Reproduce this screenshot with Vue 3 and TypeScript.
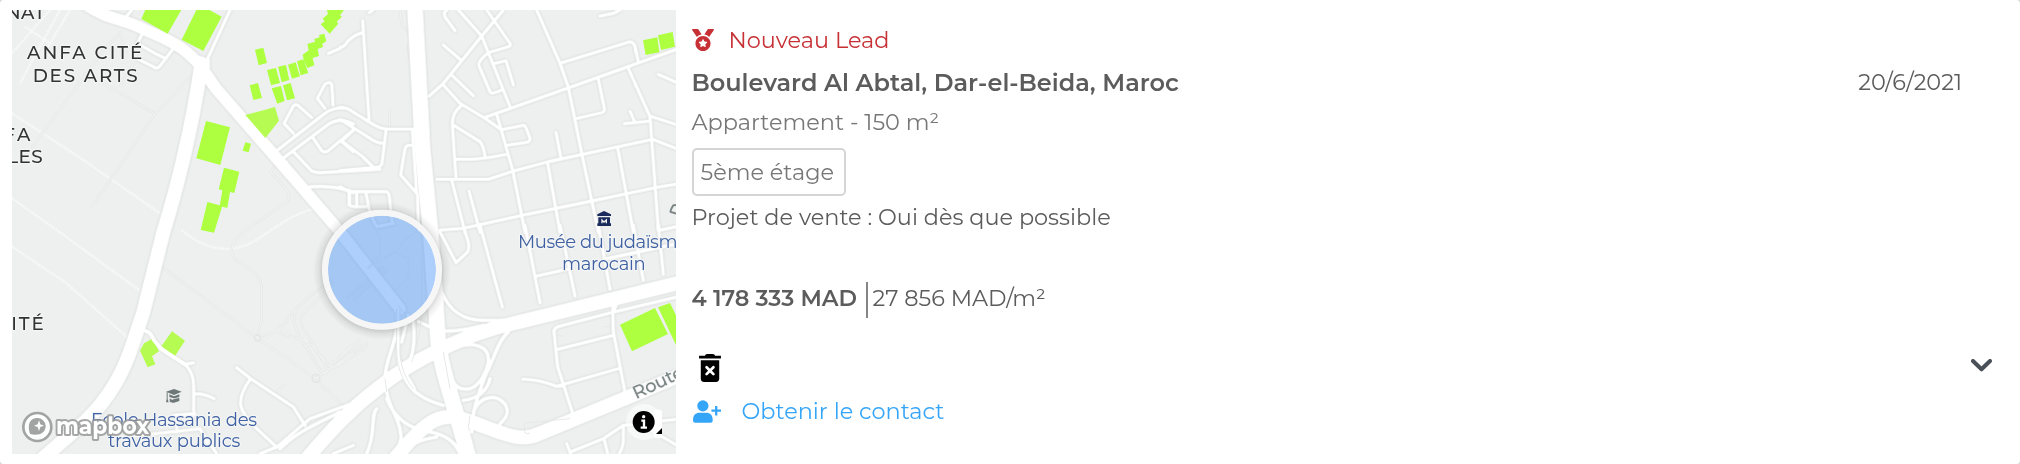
<script setup lang="ts">
interface MapLabel {
  text: string
  x: number
  y: number
  length: number
  kind: 'district' | 'poi'
}

const lead = {
  status: 'Nouveau Lead',
  address: 'Boulevard Al Abtal, Dar-el-Beida, Maroc',
  summary: 'Appartement - 150 m²',
  floor: '5ème étage',
  project: 'Projet de vente : Oui dès que possible',
  price: '4 178 333 MAD',
  unitPrice: '27 856 MAD/m²',
  date: '20/6/2021',
  action: 'Obtenir le contact',
}

const labels: MapLabel[] = [
  { text: 'NAT', x: 17, y: 56, length: 118, kind: 'district' },
  { text: 'ANFA CITÉ', x: 81, y: 178, length: 346, kind: 'district' },
  { text: 'DES ARTS', x: 98, y: 245, length: 315, kind: 'district' },
  { text: 'FA', x: 10, y: 422, length: 81, kind: 'district' },
  { text: 'LES', x: 22, y: 490, length: 106, kind: 'district' },
  { text: 'ITÉ', x: 34, y: 990, length: 97, kind: 'district' },
  { text: 'Ecole Hassania des', x: 273, y: 1277, length: 498, kind: 'poi' },
  { text: 'travaux publics', x: 324, y: 1341, length: 397, kind: 'poi' },
  { text: 'Musée du judaïsme', x: 1554, y: 745, length: 510, kind: 'poi' },
  { text: 'marocain', x: 1686, y: 811, length: 251, kind: 'poi' },
]

const parks: string[] = [
  '440,20 424,57 503,101 545,28',
  '590,28 545,119 610,153 665,50 625,28',
  '765,149 790,143 801,189 776,196',
  '749,256 774,249 786,294 760,300',
  '801,210 828,204 840,249 813,256',
  '834,200 858,195 868,240 845,247',
  '864,194 887,187 900,229 876,236',
  '891,184 910,178 925,219 902,226',
  '815,265 843,258 854,303 832,311',
  '849,256 872,249 885,295 861,301',
  '908,164 926,151 922,132 945,125 943,117 959,112 957,105 973,101 979,124 967,131 969,141 953,147 957,168 938,174 943,196 922,204 912,184',
  '980,28 1033,28 1020,46 1026,50 1010,65 1015,71 989,101 962,73 974,64 968,56 984,42',
  '618,363 690,382 661,495 589,475',
  '736,427 753,431 746,457 728,452',
  '672,503 718,515 703,579 690,576 682,624 659,618 667,571 656,568',
  '622,606 667,618 642,698 602,690',
  '1929,121 1972,112 1978,157 1937,165',
  '1974,106 2018,96 2025,140 1983,150',
  '1860,974 1965,924 2004,1002 1896,1054',
  '1974,922 2010,909 2040,970 2040,1060',
]
const softParks: string[] = [
  '736,345 825,321 837,362 796,414',
  '516,994 555,1022 525,1068 484,1039',
  '432,1030 457,1016 477,1054 456,1069 466,1093 443,1102 420,1052',
]
</script>

<template>
  <article class="card">
    <svg class="map" viewBox="36 30 1992 1332" role="img" aria-label="Carte">
      <defs>
        <radialGradient id="marker-shade">
          <stop offset="0.84" stop-color="#000" stop-opacity="0" />
          <stop offset="0.86" stop-color="#000" stop-opacity="0.15" />
          <stop offset="0.92" stop-color="#000" stop-opacity="0.06" />
          <stop offset="1" stop-color="#000" stop-opacity="0" />
        </radialGradient>
      </defs>
      <rect class="land" x="36" y="30" width="1992" height="1332" />

      <g class="trail">
        <path d="M36 595L170 690L420 872M36 740L200 850L380 1010M36 340L250 480L480 640M180 30L60 250M36 160L150 30M75 80L150 130L130 170M210 30L150 130" />
        <path d="M545 690C620 755 700 760 760 725C820 690 860 650 935 628" />
      </g>
      <g class="path-casing">
        <path d="M275 622L465 342L590 212M465 342L310 250M95 445L310 150L360 100L380 160M360 260L400 190M485 800L770 1013M730 696L860 605Q875 590 860 570L812 515L830 495M730 696C680 740 690 770 720 790C770 820 785 830 785 870V960L770 1013M770 1013L945 1135L1030 1220M770 1013L840 990C880 930 920 890 1000 840M840 970V1000L910 1020M830 1175L855 1150M1200 30L1206 80L1230 100M1225 130L1228 180M1168 385V325M945 1135L1060 1060M890 930Q870 960 905 1020L960 1110Q975 1130 985 1110L905 975Q895 955 905 945L1000 850M915 1040L930 1030L990 1100L1060 1030" />
        <path d="M1000 1105L1095 1045Q1110 1020 1080 1020L1000 1090M1010 1095L1088 1033M1040 896L1150 800M1060 900L1160 810" />
      </g>
      <g class="path-fill">
        <path d="M275 622L465 342L590 212M465 342L310 250M95 445L310 150L360 100L380 160M360 260L400 190M485 800L770 1013M730 696L860 605Q875 590 860 570L812 515L830 495M730 696C680 740 690 770 720 790C770 820 785 830 785 870V960L770 1013M770 1013L945 1135L1030 1220M770 1013L840 990C880 930 920 890 1000 840M840 970V1000L910 1020M830 1175L855 1150M1200 30L1206 80L1230 100M1225 130L1228 180M1168 385V325M945 1135L1060 1060M890 930Q870 960 905 1020L960 1110Q975 1130 985 1110L905 975Q895 955 905 945L1000 850M915 1040L930 1030L990 1100L1060 1030" />
        <path d="M1000 1105L1095 1045Q1110 1020 1080 1020L1000 1090M1010 1095L1088 1033M1040 896L1150 800M1060 900L1160 810" />
        <circle cx="772" cy="1014" r="9" />
        <circle cx="948" cy="1135" r="12" />
      </g>

      <g class="roads">
        <g class="minor">
          <path d="M375 55L395 30M430 95L412 130L465 160L498 176M520 145L480 198Q472 208 460 200L410 175M690 30L622 178M625 178V200" />
          <path d="M985 160L1020 145M820 460L975 340Q1000 320 1040 325M845 478L985 373Q1020 350 1060 372M880 455L935 513Q945 518 960 518L1140 508M910 563C970 555 1020 560 1060 578M940 415L965 452Q975 460 985 452L1060 390M880 400L852 370L880 318Q888 308 898 320L935 352M975 325L952 295L975 252Q995 240 996 260L999 315M1025 425L1060 455M1048 570V615" />
        </g>
        <g class="minor" transform="translate(1020 0)">
          <path d="M68 62L87 358M0 142Q15 140 22 125Q45 102 68 98M88 38L100 28M0 322Q20 320 45 340C90 365 110 385 140 387H225M0 358L90 415Q110 430 132 430M5 423L43 388M5 423L68 470L98 500M138 390L126 490Q122 502 108 502L0 512M217 390L230 580M215 436H205Q196 438 194 450L182 525L232 582L236 690" />
          <path d="M28 575V615Q35 622 78 620M28 575H140Q146 577 148 590L156 665M50 580V615M78 580L90 640L110 680L160 670M0 560L28 575" />
          <path d="M268 288L310 250L425 108L490 30M310 135L362 180M335 225L400 287M310 255L360 310L435 355L485 390M435 352L690 262L1010 148M355 30L425 108L510 320M320 30Q308 40 316 52L345 92M440 30L510 130Q514 136 505 140L445 158Q410 185 418 200L450 275Q455 285 485 270M465 190L498 182L520 255M590 30L660 190L685 262L725 460L775 696" />
          <path d="M660 190L860 128Q880 120 885 140L895 185M780 48L820 40L840 30M865 205L930 350L955 690M775 238L793 325Q795 335 785 338L712 355M955 223L1010 247M930 348L1010 374M853 371L930 363M870 334L883 362M290 538H445L520 513L625 485L938 418L1010 446M348 478C390 478 430 478 500 463M362 318Q335 340 337 375L348 535M340 375L420 425Q430 435 435 470M470 342L518 510L555 696M490 388L550 376Q556 376 560 388L570 415Q570 424 560 427L500 436M648 398L663 475M623 490L660 696M833 443L880 696M300 690L370 685L550 645L760 602L950 562L1010 552M335 540L375 696M387 573L420 696M960 690L1010 680" />
        </g>
        <g class="minor" transform="translate(1020 696)">
          <path d="M300 0L348 92L383 60Q388 50 385 30L375 0M420 -20L487 225M555 -20L600 212M660 -20L705 192M775 -20L810 172M880 -20L910 145M955 -20L970 127M590 132L680 112M800 80L1010 35M818 222L820 300L855 480M1010 195L820 240L660 282Q642 286 642 300L653 405L700 550M828 220L820 240M653 352L820 310M548 442Q590 440 650 463L835 410M650 463L665 462" />
          <path d="M680 635L692 665M690 660L790 620L850 580Q880 575 910 580L1010 640M850 580V625Q850 645 835 670M792 620L803 665M930 570L1010 562" />
        </g>
        <g class="minor" transform="translate(0 696)">
          <path d="M435 297Q450 297 462 325L485 352L555 397Q580 420 581 460V550M581 485Q620 485 642 500M710 407L752 440L880 525L915 580M752 440C700 510 720 540 770 590L830 645M405 612L600 590L650 665M520 550L585 545M530 555V600M600 590L625 640" />
          <path d="M555 397L580 392M830 645L930 560L1045 518M780 665L830 645M1000 665L1060 640" />
        </g>
        <g class="ramp" transform="translate(1020 696)">
          <path d="M305 180C330 240 370 265 430 265H500M300 296C350 300 390 290 430 280M235 268L270 285M170 230C180 330 135 370 135 440C135 520 185 560 183 620L170 665M175 230V350C170 420 200 490 310 520M205 250L185 330M220 270C225 330 220 370 205 390M180 390C190 430 220 450 225 480M505 300C470 330 460 390 440 420C410 500 395 540 395 600M350 345C400 330 450 340 445 390C440 420 420 460 390 470C360 475 350 465 340 450M370 505C410 500 440 480 450 440M400 540C415 500 450 490 475 500C510 520 510 550 480 575M80 665C110 600 90 550 110 530M140 500C160 550 200 590 270 600C330 610 350 640 360 665M190 660C230 620 270 620 290 615M0 540C-80 580 -130 600 -180 650" />
        </g>
        <path class="avenue" d="M250 8C320 60 370 55 430 87C520 125 550 140 605 200" />
        <path class="avenue" d="M600 190C620 230 630 240 650 268L820 463L1010 683L1200 926" />
        <path class="avenue wide" d="M604 190C575 400 520 600 490 696L430 936L402 1020C370 1120 330 1190 260 1260L120 1382" />
        <path class="avenue wide" d="M2040 848L1540 970C1400 1000 1230 1085 1140 1160C1060 1220 1000 1280 900 1400" />
        <path class="avenue wide" d="M2040 1126L1880 1193L1620 1300C1560 1330 1510 1300 1420 1268C1320 1230 1290 1250 1180 1380" />
        <path class="avenue widest" d="M1244 10L1268 450L1292 700L1306 896L1314 1020C1325 1120 1370 1230 1410 1390" />
        <circle class="junction" cx="607" cy="198" r="20" />
      </g>

      <g class="seams" transform="translate(1020 696)">
        <path d="M245 0V210C245 300 230 350 215 390M170 230V350C170 420 200 460 212 475M180 230V350C180 400 195 440 220 470M310 360L330 470M390 550L385 590M135 440L140 480" />
        <path d="M80 110L120 70V20L100 -20M85 110L125 80L165 62L205 80V135L160 180M165 62L200 20L230 0M175 220L210 270" />
        <path d="M555 590Q545 570 570 572L690 560M555 590Q550 610 570 603M655 310L672 314M790 284H810" />
      </g>

      <polygon v-for="p in parks" :key="p" class="park" :points="p" />
      <polygon v-for="p in softParks" :key="p" class="park soft" :points="p" />
      <path class="minor-top" d="M435 993Q450 993 462 1021L485 1048L555 1093" />

      <g class="museum" transform="translate(1792 633)">
        <path d="M0 10L20 0L41 10V15H0ZM3 19H38V37H41V45H0V37H3Z" />
        <path class="museum-m" d="M14 37V27L20 33L27 27V37" />
      </g>
      <g class="school">
        <path d="M498 1175L522 1167L545 1175L522 1185ZM508 1183L522 1189L538 1183V1191Q522 1198 508 1191Z" />
        <path d="M500 1177H503V1197L506 1207H498L500 1197ZM509 1195Q516 1202 522 1197L538 1194V1203L522 1208Q511 1209 509 1204Z" />
      </g>
      <path class="poi-outline" d="M2034 614L2020 616Q2010 632 2012 636L2034 642" />

      <text
        v-for="l in labels"
        :key="l.text"
        :class="['label', l.kind]"
        :x="l.x"
        :y="l.y"
        :textLength="l.length"
        lengthAdjust="spacing"
      >{{ l.text }}</text>
      <text class="label street" transform="translate(1908 1198) rotate(-25)" textLength="162">Route</text>

      <circle cx="1146" cy="812" r="207" fill="url(#marker-shade)" />
      <circle class="marker" cx="1146" cy="809.5" r="162" />
      <circle class="marker-ring" cx="1146" cy="809.5" r="171" />

      <g class="logo">
        <circle class="logo-disc" cx="112" cy="1281" r="42" />
        <path class="logo-drop" d="M90 1302C80 1270 92 1254 112 1254A25 25 0 0 1 137 1277C137 1300 116 1308 90 1302Z" />
        <path class="logo-star" d="M117 1261L121 1273L132 1277L121 1281L117 1293L113 1281L102 1277L113 1273Z" />
        <text class="logo-text" x="168" y="1302" textLength="280" lengthAdjust="spacingAndGlyphs">mapbox</text>
      </g>

      <g class="info">
        <circle class="info-halo" cx="1932" cy="1266" r="54" />
        <rect class="info-panel" x="1961" y="1229" width="25" height="86" rx="9" />
        <circle cx="1931" cy="1266" r="33" />
        <path class="info-mark" d="M1924 1262H1932V1282M1922 1283H1941" />
        <circle class="info-dot" cx="1931" cy="1250" r="5" />
        <path d="M1986 1284V1302H1968Z" />
      </g>
    </svg>

    <section class="details">
      <p class="status">
        <svg class="medal" viewBox="0 0 512 512"><path d="M223.75 130.75L154.62 15.54A32 32 0 0 0 127.18 0H16.03C3.08 0-4.5 14.57 2.92 25.18l111.27 158.96c29.72-27.77 67.52-46.83 109.56-53.39zM495.97 0H384.82c-11.24 0-21.66 5.9-27.44 15.54l-69.13 115.21c42.04 6.56 79.84 25.62 109.56 53.38L509.08 25.18C516.5 14.57 508.92 0 495.97 0zM256 160c-97.2 0-176 78.8-176 176s78.8 176 176 176 176-78.8 176-176-78.8-176-176-176zm92.52 157.26l-37.93 36.96 8.97 52.22c1.6 9.36-8.26 16.51-16.65 12.09L256 393.88l-46.9 24.65c-8.4 4.45-18.25-2.74-16.65-12.09l8.97-52.22-37.93-36.96c-6.82-6.64-3.05-18.23 6.35-19.59l52.43-7.64 23.43-47.52c2.11-4.28 6.19-6.39 10.28-6.39 4.11 0 8.22 2.14 10.33 6.39l23.43 47.52 52.43 7.64c9.4 1.36 13.17 12.95 6.35 19.59z" /></svg>
        <span>{{ lead.status }}</span>
      </p>
      <h2 class="address">{{ lead.address }}</h2>
      <p class="summary">{{ lead.summary }}</p>
      <span class="chip">{{ lead.floor }}</span>
      <p class="project">{{ lead.project }}</p>
      <p class="prices">
        <strong class="price">{{ lead.price }}</strong>
        <span class="unit-price">{{ lead.unitPrice }}</span>
      </p>
      <button class="trash" type="button" aria-label="Supprimer">
        <svg viewBox="0 0 64 82">
          <path d="M17 5Q18 0 24 0H40Q46 0 47 5H64V13H0V5ZM5 18H59V72Q59 82 49 82H15Q5 82 5 72Z" />
          <path class="cross" d="M22 39L42 59M42 39L22 59" />
        </svg>
      </button>
      <a class="contact">
        <svg viewBox="0 0 85 68">
          <circle cx="30" cy="17" r="17" />
          <path d="M0 61C0 45 8 38 20 38H40C52 38 60 45 60 61Q60 68 53 68H7Q0 68 0 61ZM67 17H74V28H85V35H74V46H67V35H56V28H67Z" />
        </svg>
        <span>{{ lead.action }}</span>
      </a>
    </section>

    <aside class="side">
      <time class="date">{{ lead.date }}</time>
      <svg class="chevron" viewBox="0 0 21 13"><path d="M2 2L10.500 10.300L19 2" /></svg>
    </aside>
  </article>
</template>

<style>
body {
  background: #d9d9d9;
}
</style>

<style scoped>
.card {
  display: flex;
  box-sizing: border-box;
  width: 2020px;
  height: 464px;
  padding: 10px 12px;
  overflow: hidden;
  border-radius: 4px;
  background: #fff;
  color: #5c5c5c;
  font: 400 22.4px/28px Montserrat, Inter, "Liberation Sans", sans-serif;
}
p,
h2 {
  margin: 0;
  font-size: inherit;
  white-space: nowrap;
}

.map {
  flex: none;
  width: 664px;
  height: 444px;
}
.land { fill: #eef0f0; }
.map path { fill: none; }
.trail { stroke: #f8f9f9; stroke-width: 7; stroke-dasharray: 5 3; fill: none; }
.path-casing { stroke: #e5e6e6; stroke-width: 8; fill: none; }
.path-fill { stroke: #f0f2f2; stroke-width: 4; fill: none; }
.path-fill circle { stroke: #e3e5e5; }
.roads {
  fill: none;
  stroke: #fff;
  stroke-linecap: round;
  stroke-linejoin: round;
  filter: drop-shadow(0 0 3px rgba(0, 0, 0, 0.16));
}
.minor { stroke-width: 10; }
.ramp { stroke-width: 11; }
.avenue { stroke-width: 36; }
.avenue.wide { stroke-width: 43; }
.avenue.widest { stroke-width: 48; }
.junction { fill: #fff; stroke: none; }
.minor-top { stroke: #fff; stroke-width: 11; }
.seams { stroke: #e6e8e8; stroke-width: 3; }
.park { fill: #adff40; }
.park.soft { fill: #b6fb52; }

.map .museum path:first-child { fill: #1b2a5c; }
.map .museum-m { stroke: #eef0f0; stroke-width: 4; }
.map .school path { fill: #6f7878; }
.poi-outline { stroke: #7c8585; stroke-width: 6; }

.label {
  font-size: 54px;
  paint-order: stroke;
  stroke: #f4f5f5;
  stroke-width: 7px;
  stroke-linejoin: round;
}
.district { fill: #333; font-weight: 500; font-size: 55px; }
.poi { fill: #3f61a3; }
.street { fill: #7c8585; font-weight: 500; }

.marker { fill: rgba(75, 148, 248, 0.45); }
.marker-ring {
  fill: none;
  stroke: #f6f6f6;
  stroke-width: 18;
}

.logo-disc { fill: rgba(255, 255, 255, 0.9); stroke: #a2a4a4; stroke-width: 8; }
.map .logo-drop { fill: #a2a4a4; }
.map .logo-star { fill: #fff; }
.logo-text {
  fill: #fff;
  stroke: rgba(150, 152, 152, 0.85);
  stroke-width: 12px;
  stroke-linejoin: round;
  paint-order: stroke;
  font-size: 68px;
  font-weight: 700;
}
.info-halo { fill: rgba(255, 255, 255, 0.5); }
.info-panel { fill: #fff; }
.map .info path { fill: #000; }
.map .info .info-mark { fill: none; stroke: #fff; stroke-width: 7; }
.map .info .info-dot { fill: #fff; }

.details {
  display: flex;
  flex-direction: column;
  align-items: flex-start;
  padding: 16px 0 0 15.5px;
}
.status {
  display: flex;
  align-items: center;
  gap: 15px;
  color: #c73136;
}
.medal {
  width: 22px;
  height: 22px;
  fill: currentColor;
}
.address {
  margin-top: 15px;
  font-size: 24px;
  font-weight: 600;
}
.summary {
  margin-top: 11px;
  color: #777;
}
.chip {
  box-sizing: border-box;
  width: 154px;
  height: 48px;
  margin-top: 12px;
  padding: 8px 7px;
  border: 2px solid #d5d5d5;
  border-radius: 5px;
  color: #777;
  white-space: nowrap;
}
.project {
  margin-top: 7px;
}
.prices {
  display: flex;
  height: 36px;
  margin-top: 51px;
  line-height: 32px;
}
.price {
  width: 174px;
  font-weight: 600;
}
.unit-price {
  padding-left: 5px;
  border-left: 2px solid #858585;
}
.trash {
  display: flex;
  margin: 36px 0 0 7px;
  padding: 0;
  border: 0;
  background: none;
}
.trash svg {
  width: 22px;
  height: 28px;
}
.cross {
  stroke: #fff;
  stroke-width: 8;
  stroke-linecap: round;
}
.contact {
  display: flex;
  align-items: center;
  gap: 21px;
  margin: 15px 0 0 1px;
  color: #35a5f8;
}
.contact svg {
  width: 28px;
  height: 23px;
  fill: currentColor;
}

.side {
  display: flex;
  flex-direction: column;
  align-items: flex-end;
  margin-left: auto;
  padding: 58px 16px 0 0;
}
.date {
  margin-right: 30px;
}
.chevron {
  width: 21px;
  height: 13px;
  margin-top: 263px;
  fill: none;
  stroke: #495057;
  stroke-width: 4;
  stroke-linecap: round;
  stroke-linejoin: round;
}
</style>
